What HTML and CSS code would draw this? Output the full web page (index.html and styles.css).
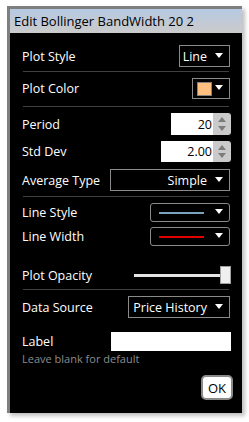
FILE: index.html
```html
<html>
  <head>
    <title>Edit Bollinger BandWidth</title>
    <link rel="stylesheet" href="styles.css">
  </head>
  <body>
    <div class="dialog">
      <div class="titlebar">Edit Bollinger BandWidth 20 2</div>
      <div class="content">
        <div class="row r-style">
          <span class="label">Plot Style</span>
          <div class="select sel-style">Line <span class="arrow"></span></div>
        </div>
        <div class="sep"></div>
        <div class="row r-color">
          <span class="label">Plot Color</span>
          <div class="select sel-color"><span class="swatch"></span><span class="arrow"></span></div>
        </div>
        <div class="sep"></div>
        <div class="row r-period">
          <span class="label">Period</span>
          <div class="spin spin-period"><span class="num">20</span><span class="spinner"><i class="up"></i><i class="down"></i></span></div>
        </div>
        <div class="row r-std">
          <span class="label">Std Dev</span>
          <div class="spin spin-std"><span class="num">2.00</span><span class="spinner"><i class="up"></i><i class="down"></i></span></div>
        </div>
        <div class="row r-avg">
          <span class="label">Average Type</span>
          <div class="select sel-avg">Simple <span class="arrow"></span></div>
        </div>
        <div class="sep"></div>
        <div class="row r-lstyle">
          <span class="label">Line Style</span>
          <div class="select sel-line"><span class="line blue"></span><span class="arrow"></span></div>
        </div>
        <div class="row r-lwidth">
          <span class="label">Line Width</span>
          <div class="select sel-line"><span class="line red"></span><span class="arrow"></span></div>
        </div>
        <div class="row r-opacity">
          <span class="label">Plot Opacity</span>
          <div class="slider"><span class="track"></span><span class="thumb"></span></div>
        </div>
        <div class="sep"></div>
        <div class="row r-source">
          <span class="label">Data Source</span>
          <div class="select sel-source">Price History <span class="arrow"></span></div>
        </div>
        <div class="row r-label">
          <span class="label">Label</span>
          <div class="textbox"></div>
        </div>
        <div class="hint">Leave blank for default</div>
        <div class="footer">
          <button class="ok">OK</button>
        </div>
      </div>
    </div>
  </body>
</html>
```

FILE: styles.css
```css
body {
  margin: 0;
  background: #fff;
  font-family: "Open Sans", "Noto Sans", sans-serif;
  font-size: 12.5px;
}
.dialog {
  margin: 6px 0 0 7px;
  width: 232px;
  height: 404px;
  border-top: 3px solid #7f7f7f;
  border-left: 3px solid #7f7f7f;
  background: #000;
  box-shadow: 3px 3px 4px rgba(0, 0, 0, 0.25);
  display: flex;
  flex-direction: column;
}
.titlebar {
  height: 24px;
  line-height: 24px;
  padding-left: 4px;
  background: linear-gradient(#b6c9e2, #cbcbcb);
  color: #000;
  font-size: 13px;
  white-space: nowrap;
}
.content {
  padding: 0 12px 0 12px;
  color: #fff;
  flex: 1;
}
.row {
  display: flex;
  align-items: center;
  justify-content: space-between;
}
.label {
  white-space: nowrap;
}
.sep {
  height: 1px;
  background: #404040;
  margin: 0 1px;
}
.r-style { height: 22px; margin-top: 12px; margin-bottom: 4px; }
.r-color { height: 21px; margin-top: 6px; margin-bottom: 7px; }
.r-period { height: 22px; margin-top: 6px; }
.r-std { height: 21px; margin-top: 6px; }
.r-avg { height: 22px; margin-top: 7px; margin-bottom: 5px; }
.r-lstyle { height: 19px; margin-top: 6px; }
.r-lwidth { height: 19px; margin-top: 5px; }
.r-opacity { height: 18px; margin-top: 20px; margin-bottom: 5px; }
.r-source { height: 22px; margin-top: 6px; }
.r-label { height: 19px; margin-top: 14px; }

.select {
  box-sizing: border-box;
  height: 100%;
  border: 1px solid #8a8a8a;
  display: flex;
  align-items: center;
  justify-content: flex-end;
  padding-right: 6px;
  white-space: nowrap;
}
.arrow {
  width: 0;
  height: 0;
  border-left: 4px solid transparent;
  border-right: 4px solid transparent;
  border-top: 5px solid #fff;
  margin-left: 8px;
  margin-top: -2px;
}
.sel-style { width: 51px; }
.sel-color { width: 38px; justify-content: space-between; padding-left: 4px; }
.swatch {
  width: 13px;
  height: 12px;
  background: #ffbf80;
  border: 1px solid #808080;
}
.sel-color .arrow { margin-left: 0; }
.sel-avg { width: 120px; }
.sel-source { width: 102px; }
.sel-line {
  width: 80px;
  border-radius: 3px;
  justify-content: space-between;
  padding-left: 8px;
}
.sel-line .arrow { margin-left: 0; }
.line {
  width: 45px;
  height: 2px;
}
.line.blue { background: #7aa3bd; }
.line.red { background: #e00000; }

.spin {
  height: 100%;
  display: flex;
  margin-right: -1px;
}
.num {
  background: #fff;
  color: #000;
  display: flex;
  align-items: center;
  justify-content: flex-end;
  padding-right: 1px;
}
.spin-period .num { width: 41px; }
.spin-std .num { width: 51px; }
.spinner {
  width: 18px;
  background: #cacaca;
  border-radius: 0 3px 3px 0;
  display: flex;
  flex-direction: column;
  align-items: center;
  justify-content: space-around;
  padding: 2px 0;
  box-sizing: border-box;
}
.spinner i {
  width: 0;
  height: 0;
  border-left: 4px solid transparent;
  border-right: 4px solid transparent;
}
.spinner .up { border-bottom: 5px solid #7c7c7c; }
.spinner .down { border-top: 5px solid #7c7c7c; }

.slider {
  width: 97px;
  height: 100%;
  display: flex;
  align-items: center;
  margin-right: -1px;
}
.track {
  flex: 1;
  height: 3px;
  background: #e4e4e4;
}
.thumb {
  box-sizing: border-box;
  width: 11px;
  height: 18px;
  background: #efefef;
  border: 1px solid #a0a0a0;
}

.textbox {
  width: 120px;
  height: 100%;
  background: #fff;
  margin-right: -1px;
}
.hint {
  color: #8c8c8c;
  font-size: 11px;
  margin-top: 0;
}
.footer {
  display: flex;
  justify-content: flex-end;
  margin-top: 9px;
  margin-right: -3px;
}
.ok {
  width: 32px;
  height: 25px;
  padding: 0;
  background: #fff;
  color: #000;
  border: 2px solid #8a8a8a;
  border-radius: 5px;
  font-family: "Open Sans", "Noto Sans", sans-serif;
  font-size: 13px;
}
```
